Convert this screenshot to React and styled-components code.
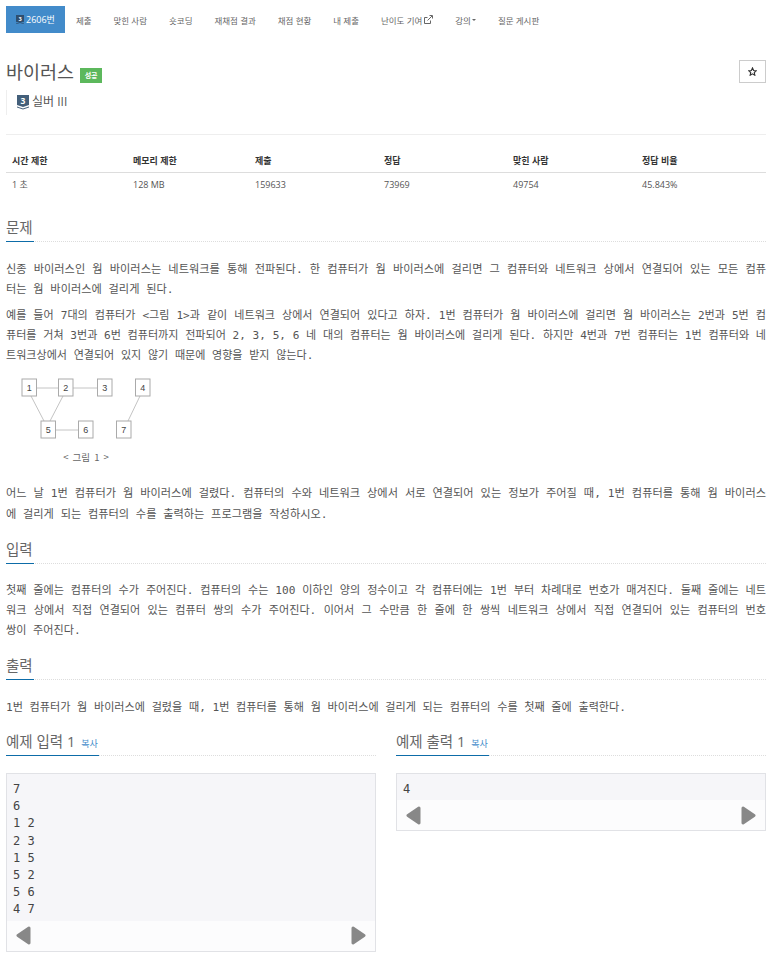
import styled, { createGlobalStyle } from "styled-components";

const GlobalStyle = createGlobalStyle`
    body {
        margin: 0;
        background: #fff;
        color: #555;
        font-family: "Open Sans", "Noto Sans CJK KR", sans-serif;
        font-size: 10px;
    }
`

const Page = styled.div`
    width: 760px;
    padding: 6px 14px 12px 6px;
`

const Tabs = styled.ul`
    display: flex;
    list-style: none;
    margin: 0;
    padding: 0;
    height: 27px;
`

const Tab = styled.li`
    display: flex;
    align-items: center;
    gap: 2px;
    height: 27px;
    padding: 0 ${(p) => (p.$active ? "10px" : "11px")};
    background: ${(p) => (p.$active ? "#428bca" : "transparent")};
    color: ${(p) => (p.$active ? "#fff" : "#666")};
    font-size: ${(p) => (p.$active ? "9px" : "8.5px")};
    white-space: nowrap;
`

const Caret = styled.span`
    width: 0;
    height: 0;
    margin-left: -1px;
    border-top: 2px solid #666;
    border-left: 2px solid transparent;
    border-right: 2px solid transparent;
`

const TitleRow = styled.div`
    display: flex;
    align-items: flex-start;
    justify-content: space-between;
    margin-top: 27px;
    height: 24px;
`

const TitleLeft = styled.div`
    display: flex;
    align-items: center;
    gap: 6px;
`

const Title = styled.h1`
    margin: 0;
    font-size: 18.5px;
    font-weight: 400;
    line-height: 24px;
    color: #555;
`

const Badge = styled.span`
    display: flex;
    align-items: center;
    justify-content: center;
    width: 22px;
    height: 15px;
    margin-top: 6px;
    background: #5cb85c;
    color: #fff;
    font-size: 7px;
    font-weight: 700;
`

const StarButton = styled.button`
    display: flex;
    align-items: center;
    justify-content: center;
    width: 27px;
    height: 23px;
    padding: 0;
    border: 1px solid #ccc;
    background: #fff;
    color: #333;
`

const Tier = styled.div`
    display: flex;
    align-items: center;
    gap: 3px;
    height: 25px;
    margin-top: 6px;
    padding-left: 10px;
    border-left: 1px solid #eee;
    font-size: 12px;
    color: #555;
`

const TierName = styled.span`
    margin-top: -3px;
`

const Stats = styled.table`
    width: 760px;
    margin-top: 19px;
    border-top: 1px solid #eee;
    border-collapse: collapse;
    table-layout: fixed;
    font-size: 9px;
    th, td {
        padding: 0 6px;
        text-align: left;
    }
    th {
        height: 38px;
        padding-top: 13px;
        box-sizing: border-box;
        border-bottom: 1px solid #ddd;
        color: #333;
        font-weight: 700;
    }
    td {
        height: 23px;
    }
`

const Section = styled.section`
    margin-top: ${(p) => p.$top}px;
`

const Heading = styled.div`
    display: flex;
    height: 24px;
    border-bottom: 1px dotted #ddd;
`

const HeadingText = styled.h2`
    margin: 0 0 -1px;
    display: flex;
    align-items: baseline;
    gap: 6px;
    height: 24px;
    padding-right: 1px;
    border-bottom: 1px solid #0d6ca8;
    font-size: 14.5px;
    line-height: 21px;
    font-weight: 400;
    color: #666;
    white-space: nowrap;
`

const CopyLink = styled.span`
    font-size: 9px;
    color: #428bca;
`

const Body = styled.div`
    margin-top: 17.5px;
    font-family: "DejaVu Sans Mono", "Noto Sans CJK KR", monospace;
    line-height: 20.1px;
    color: #555;
    text-align: justify;
`

const Para = styled.p`
    margin: 0 0 6.5px;
    font-size: ${(p) => p.$size || 11.1}px;
`

const Figure = styled.div`
    height: 108.5px;
    padding-top: 3px;
    svg {
        display: block;
    }
`

const Samples = styled.div`
    display: grid;
    grid-template-columns: 370px 370px;
    gap: 20px;
    margin-top: 13px;
    align-items: start;
`

const Pre = styled.div`
    margin-top: 17px;
    border: 1px solid #e1e2e6;
    background: #fcfcfd;
`

const Code = styled.pre`
    margin: 0;
    padding: 7px 6px 2px;
    background: #f6f6f9;
    font-family: "DejaVu Sans Mono", monospace;
    font-size: 12px;
    line-height: 17.2px;
    color: #444;
    overflow: hidden;
`

const ScrollBar = styled.div`
    display: flex;
    align-items: center;
    justify-content: space-between;
    height: 30px;
    padding: 0 9px;
`

const Arrow = ({ right }) => (
  <svg width="15" height="19" viewBox="0 0 15 19">
    <path
      d={right ? "M2 2 L13 9.5 L2 17 Z" : "M13 2 L2 9.5 L13 17 Z"}
      fill="#888"
      stroke="#888"
      strokeWidth="3"
      strokeLinejoin="round"
    />
  </svg>
);

const TierIcon = ({ size, light }) => (
  <svg width={size} height={size * 1.2} viewBox="0 0 12 14.4">
    <path d="M0 0H12V10L6 12L0 10Z" fill={light ? "#2f4f6f" : "#435f7a"} />
    <path d="M0 11.5L6 13.5L12 11.5V12.6L6 14.4L0 12.6Z" fill={light ? "#2f4f6f" : "#435f7a"} />
    <text x="6" y="8.5" textAnchor="middle" fontSize="8.5" fontWeight="700" fill="#fff" fontFamily="Open Sans">3</text>
  </svg>
);

const ExternalIcon = () => (
  <svg width="9" height="9" viewBox="0 0 9 9" fill="none" stroke="#666">
    <path d="M6.5 5.5V8.5H.5V2.5H3.5" />
    <path d="M3.5 5.5L8 1M5.5.5H8.5V3.5" />
  </svg>
);

const StarIcon = () => (
  <svg width="9" height="9" viewBox="0 0 24 24" fill="none" stroke="#333" strokeWidth="3">
    <path d="M12 2.5L15 9.2 22 10 16.8 14.8 18.2 22 12 18.3 5.8 22 7.2 14.8 2 10 9 9.2Z" />
  </svg>
);

const nodes = [
  [1, 22, 379],
  [2, 58.5, 379],
  [3, 97.5, 379],
  [4, 135.5, 379],
  [5, 41, 421],
  [6, 78.5, 421],
  [7, 116.5, 421],
];

const Diagram = () => (
  <svg width="150" height="90" viewBox="6 376 150 90">
    <g stroke="#c4c4c4" fill="none">
      <path d="M36 388H58M73 388H97M31 396L44 421M63 396L50 421M55 430H78M140 396L128 421" />
      {nodes.map(([n, x, y]) => (
        <rect key={n} x={x} y={y} width="14.5" height="17" fill="#fff" stroke="#aaa" />
      ))}
    </g>
    {nodes.map(([n, x, y]) => (
      <text key={n} x={x + 7.2} y={y + 12} textAnchor="middle" fontSize="9" fill="#444" fontFamily="Liberation Sans">{n}</text>
    ))}
    <text x="86" y="461" textAnchor="middle" fontSize="9.5" fill="#666" fontFamily="Noto Sans CJK KR" wordSpacing="2">{"< 그림 1 >"}</text>
  </svg>
);

const menu = ["맞힌 사람", "숏코딩", "재채점 결과", "채점 현황", "내 제출"];

const stats = [
  ["시간 제한", "1 초", 121],
  ["메모리 제한", "128 MB", 122],
  ["제출", "159633", 129],
  ["정답", "73969", 129],
  ["맞힌 사람", "49754", 129],
  ["정답 비율", "45.843%", 130],
];

const Sample = ({ title, text }) => (
  <div>
    <Heading>
      <HeadingText>{title} <CopyLink>복사</CopyLink></HeadingText>
    </Heading>
    <Pre>
      <Code>{text}</Code>
      <ScrollBar>
        <Arrow />
        <Arrow right />
      </ScrollBar>
    </Pre>
  </div>
);

const App = () => (
  <Page>
    <GlobalStyle />
    <Tabs>
      <Tab $active><TierIcon size={8} light /> 2606번</Tab>
      <Tab>제출</Tab>
      {menu.map((m) => <Tab key={m}>{m}</Tab>)}
      <Tab>난이도 기여 <ExternalIcon /></Tab>
      <Tab>강의<Caret /></Tab>
      <Tab>질문 게시판</Tab>
    </Tabs>

    <TitleRow>
      <TitleLeft>
        <Title>바이러스</Title>
        <Badge>성공</Badge>
      </TitleLeft>
      <StarButton aria-label="star"><StarIcon /></StarButton>
    </TitleRow>
    <Tier><TierIcon size={12} /> <TierName>실버 III</TierName></Tier>

    <Stats>
      <colgroup>
        {stats.map(([h, , w]) => <col key={h} width={w} />)}
      </colgroup>
      <thead>
        <tr>{stats.map(([h]) => <th key={h}>{h}</th>)}</tr>
      </thead>
      <tbody>
        <tr>{stats.map(([h, v]) => <td key={h}>{v}</td>)}</tr>
      </tbody>
    </Stats>

    <Section $top={21}>
      <Heading><HeadingText>문제</HeadingText></Heading>
      <Body>
        <Para $size={11.2}>신종 바이러스인 웜 바이러스는 네트워크를 통해 전파된다. 한 컴퓨터가 웜 바이러스에 걸리면 그 컴퓨터와 네트워크 상에서 연결되어 있는 모든 컴퓨터는 웜 바이러스에 걸리게 된다.</Para>
        <Para $size={11.05}>예를 들어 7대의 컴퓨터가 &lt;그림 1&gt;과 같이 네트워크 상에서 연결되어 있다고 하자. 1번 컴퓨터가 웜 바이러스에 걸리면 웜 바이러스는 2번과 5번 컴퓨터를 거쳐 3번과 6번 컴퓨터까지 전파되어 2, 3, 5, 6 네 대의 컴퓨터는 웜 바이러스에 걸리게 된다. 하지만 4번과 7번 컴퓨터는 1번 컴퓨터와 네트워크상에서 연결되어 있지 않기 때문에 영향을 받지 않는다.</Para>
        <Figure><Diagram /></Figure>
        <Para $size={11.2}>어느 날 1번 컴퓨터가 웜 바이러스에 걸렸다. 컴퓨터의 수와 네트워크 상에서 서로 연결되어 있는 정보가 주어질 때, 1번 컴퓨터를 통해 웜 바이러스에 걸리게 되는 컴퓨터의 수를 출력하는 프로그램을 작성하시오.</Para>
      </Body>
    </Section>

    <Section $top={14}>
      <Heading><HeadingText>입력</HeadingText></Heading>
      <Body>
        <Para>첫째 줄에는 컴퓨터의 수가 주어진다. 컴퓨터의 수는 100 이하인 양의 정수이고 각 컴퓨터에는 1번 부터 차례대로 번호가 매겨진다. 둘째 줄에는 네트워크 상에서 직접 연결되어 있는 컴퓨터 쌍의 수가 주어진다. 이어서 그 수만큼 한 줄에 한 쌍씩 네트워크 상에서 직접 연결되어 있는 컴퓨터의 번호 쌍이 주어진다.</Para>
      </Body>
    </Section>

    <Section $top={14}>
      <Heading><HeadingText>출력</HeadingText></Heading>
      <Body>
        <Para>1번 컴퓨터가 웜 바이러스에 걸렸을 때, 1번 컴퓨터를 통해 웜 바이러스에 걸리게 되는 컴퓨터의 수를 첫째 줄에 출력한다.</Para>
      </Body>
    </Section>

    <Samples>
      <Sample title="예제 입력 1" text={"7\n6\n1 2\n2 3\n1 5\n5 2\n5 6\n4 7"} />
      <Sample title="예제 출력 1" text="4" />
    </Samples>
  </Page>
);

export default App;
